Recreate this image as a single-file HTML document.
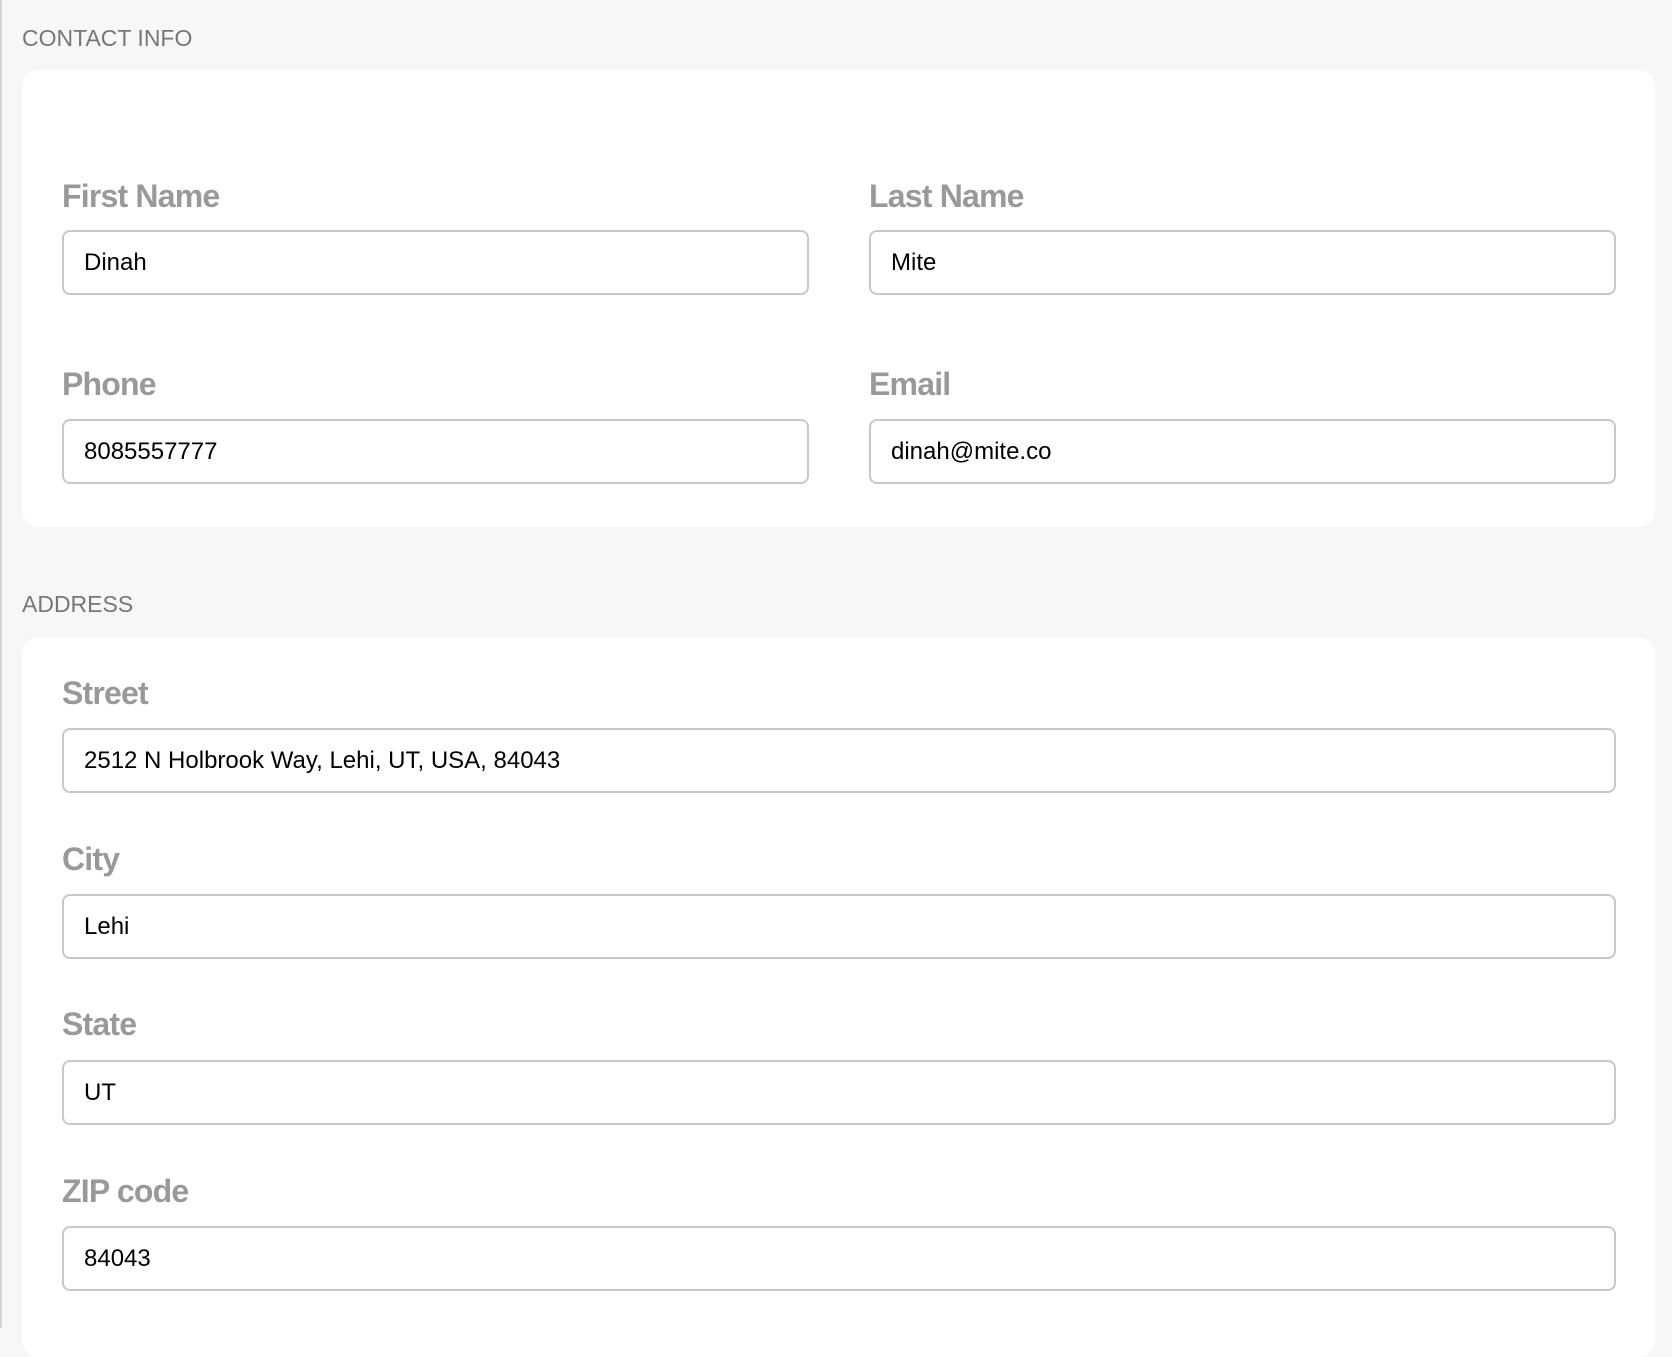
<!DOCTYPE html>
<html><head><meta charset="utf-8"><style>
html,body{margin:0;padding:0}
body{width:1672px;height:1328px;background:#f7f7f7;position:relative;overflow:hidden;font-family:"Liberation Sans",sans-serif}
.edge{position:absolute;left:0;top:0;width:2px;height:1328px;background:#d4d4d4}
.sec{position:absolute;left:22px;font-size:23px;color:#777;line-height:23px}
.card{position:absolute;left:22px;width:1633px;background:#fff;border-radius:17px}
.lab{position:absolute;font-size:32px;line-height:32px;font-weight:bold;color:#999;letter-spacing:-0.8px}
.in{position:absolute;box-sizing:border-box;height:65px;border:2px solid #c8c8c8;border-radius:8px;background:#fff;font-size:24px;line-height:61px;padding-left:20px;color:#000}
</style></head><body>
<div class="edge"></div>
<div class="sec" style="top:27px">CONTACT INFO</div>
<div class="card" style="top:70px;height:457px"></div>
<div class="lab" style="left:62px;top:180px">First Name</div>
<div class="lab" style="left:869px;top:180px">Last Name</div>
<div class="in" style="left:62px;top:230px;width:747px">Dinah</div>
<div class="in" style="left:869px;top:230px;width:747px">Mite</div>
<div class="lab" style="left:62px;top:368px">Phone</div>
<div class="lab" style="left:869px;top:368px">Email</div>
<div class="in" style="left:62px;top:419px;width:747px">8085557777</div>
<div class="in" style="left:869px;top:419px;width:747px">dinah@mite.co</div>
<div class="sec" style="top:593px">ADDRESS</div>
<div class="card" style="top:637px;height:720px"></div>
<div class="lab" style="left:62px;top:677px">Street</div>
<div class="in" style="left:62px;top:728px;width:1554px">2512 N Holbrook Way, Lehi, UT, USA, 84043</div>
<div class="lab" style="left:62px;top:843px">City</div>
<div class="in" style="left:62px;top:894px;width:1554px">Lehi</div>
<div class="lab" style="left:62px;top:1008px">State</div>
<div class="in" style="left:62px;top:1060px;width:1554px">UT</div>
<div class="lab" style="left:62px;top:1175px">ZIP code</div>
<div class="in" style="left:62px;top:1226px;width:1554px">84043</div>
</body></html>
